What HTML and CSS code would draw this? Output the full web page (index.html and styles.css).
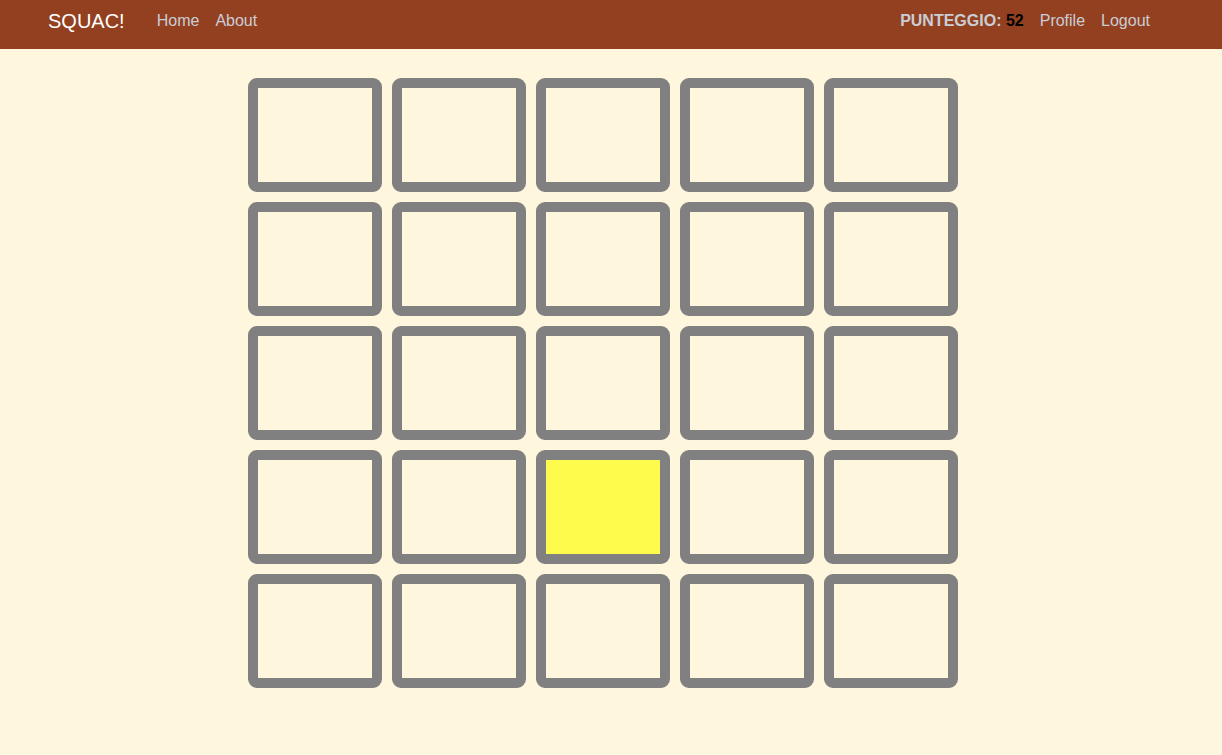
FILE: index.html
```html
<!DOCTYPE html>
<html lang="it">
<head>
<meta charset="utf-8">
<title>SQUAC!</title>
<link rel="stylesheet" href="styles.css">
</head>
<body>
<nav class="navbar">
  <a class="brand" href="#">SQUAC!</a>
  <ul class="nav nav-left">
    <li><a class="nav-link" href="#">Home</a></li>
    <li><a class="nav-link" href="#">About</a></li>
  </ul>
  <ul class="nav nav-right">
    <li class="score">PUNTEGGIO: <span class="score-value">52</span></li>
    <li><a class="nav-link" href="#">Profile</a></li>
    <li><a class="nav-link" href="#">Logout</a></li>
  </ul>
</nav>
<main class="board-wrap">
  <div class="board">
    <div class="cell"></div><div class="cell"></div><div class="cell"></div><div class="cell"></div><div class="cell"></div>
    <div class="cell"></div><div class="cell"></div><div class="cell"></div><div class="cell"></div><div class="cell"></div>
    <div class="cell"></div><div class="cell"></div><div class="cell"></div><div class="cell"></div><div class="cell"></div>
    <div class="cell"></div><div class="cell"></div><div class="cell active"></div><div class="cell"></div><div class="cell"></div>
    <div class="cell"></div><div class="cell"></div><div class="cell"></div><div class="cell"></div><div class="cell"></div>
  </div>
</main>
</body>
</html>
```
FILE: styles.css
```css
* { box-sizing: border-box; }
html, body {
  margin: 0;
  padding: 0;
  background: #fff6de;
  font-family: "Liberation Sans", Arial, sans-serif;
  font-size: 16px;
}
.navbar {
  display: flex;
  align-items: flex-start;
  height: 49px;
  background: #934020;
  padding: 0 64px 0 48px;
}
.brand {
  color: #ffffff;
  text-decoration: none;
  font-size: 20px;
  line-height: 30px;
  margin-top: 6px;
  margin-right: 24px;
}
.nav {
  display: flex;
  list-style: none;
  margin: 0;
  padding: 0;
  padding-top: 9px;
}
.nav li {
  line-height: 24px;
}
.nav-link {
  display: block;
  color: #c9ced6;
  text-decoration: none;
  padding: 0 8px;
}
.nav-right {
  margin-left: auto;
}
.score {
  color: #c9ced6;
  font-weight: bold;
  padding-right: 8px;
}
.score-value {
  color: #000000;
}
.board-wrap {
  display: flex;
  justify-content: center;
  padding: 29px 16px 0 0;
}
.board {
  display: grid;
  grid-template-columns: repeat(5, 134px);
  grid-auto-rows: 114px;
  gap: 10px;
}
.cell {
  border: 10px solid #808080;
  border-radius: 9px;
  background: transparent;
}
.cell.active {
  background: #fffb4d;
}
```
